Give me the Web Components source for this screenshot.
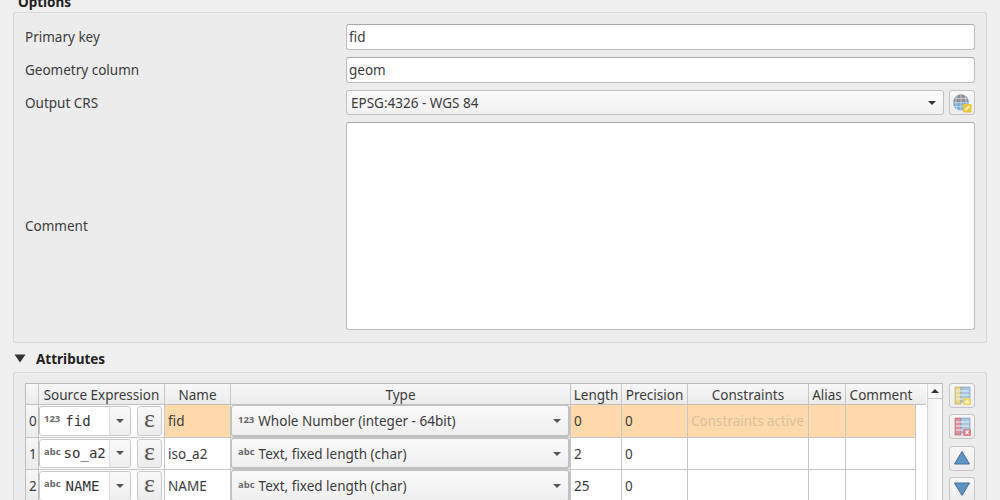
<!DOCTYPE html>
<html>
<head>
<meta charset="utf-8">
<style>
html, body { margin: 0; height: 500px; overflow: hidden; background: #efefef; }
body { font-family: "Noto Sans", sans-serif; font-size: 13.5px; color: #3c3c3c; }
qgis-page { --cols: 13px 126px 66px 340px 51px 66px 121px 37px 70px; }
</style>
</head>
<body>

<template id="group-tpl">
  <style>
    :host { display: block; }
    .title { display: flex; align-items: center; gap: 10px; height: 20px; box-sizing: border-box; font-weight: 700; color: #222; font-size: 13.500px; }
    .title svg { display: none; }
    :host([collapsible]) .title { height: 22px; padding: 0 0 5px 1px; }
    :host([collapsible]) .title svg { display: block; }
    :host(:not([collapsible])) .title { padding-left: 5px; }
    .box { border: 1px solid #d8d8d8; border-radius: 2px; background: #ececec; padding: var(--pad, 11px 11px 12px); }
  </style>
  <div class="title">
    <svg width="12" height="9" viewBox="0 0 12 9"><path d="M0.5 0.5h11L6 8.5z" fill="#333"/></svg>
    <span><slot name="title"></slot></span>
  </div>
  <div class="box"><slot></slot></div>
</template>

<script>
class QgisPage extends HTMLElement {
  constructor() {
    super();
    this.attachShadow({mode: "open"}).innerHTML = `
      <style>
        :host { display: flex; flex-direction: column; padding: 0 13px; margin-top: -8px; height: 508px; overflow: hidden; }
      </style><slot></slot>`;
  }
}
class QgisGroup extends HTMLElement {
  constructor() {
    super();
    this.attachShadow({mode: "open"}).appendChild(document.getElementById("group-tpl").content.cloneNode(true));
  }
}
class FormGrid extends HTMLElement {
  constructor() {
    super();
    this.attachShadow({mode: "open"}).innerHTML = `
      <style>
        :host { display: grid; grid-template-columns: 321px 1fr; row-gap: 7px; align-items: center; }
      </style><slot></slot>`;
  }
}
class LineEdit extends HTMLElement {
  constructor() {
    super();
    this.attachShadow({mode: "open"}).innerHTML = `
      <style>
        :host { display: block; height: 26px; box-sizing: border-box; background: #fff; border: 1px solid #bdbdbd; border-top-color: #aaa; border-radius: 3px; padding: 0 2px; line-height: 24px; color: #3c3c3c; }
        :host([multi]) { height: 208px; }
      </style><slot></slot>`;
  }
}
class ComboRow extends HTMLElement {
  constructor() {
    super();
    this.attachShadow({mode: "open"}).innerHTML = `
      <style>
        :host { display: flex; gap: 5px; height: 25px; }
        .combo { flex: 1; display: flex; align-items: center; justify-content: space-between; box-sizing: border-box; border: 1px solid #c0c0c0; border-radius: 3px; background: linear-gradient(#fbfbfb, #f1f1f1); padding: 0 7px 0 4px; }
        .arrow { width: 0; height: 0; border: 4.500px solid transparent; border-top: 4.500px solid #333; border-bottom: 0; }
        .btn { width: 26px; box-sizing: border-box; border: 1px solid #c4c4c4; border-radius: 3px; background: linear-gradient(#f8f8f8, #ececec); display: flex; align-items: center; justify-content: center; }
      </style>
      <div class="combo"><span><slot></slot></span><span class="arrow"></span></div>
      <div class="btn">
        <svg width="20" height="20" viewBox="0 0 20 20">
          <circle cx="9" cy="9.500" r="8" fill="#7eaed6"/>
          <path d="M1.500 8.500C3 3 6 1.500 9 1.500s6 1.500 7.500 7c-4 2-11 2-15 0z" fill="#8b9098"/>
          <path d="M1 9.500h16M9 1.500v16M5 2.500c-1.500 4-1.500 10 0 14M13 2.500c1.500 4 1.500 10 0 14M2.500 5.500h13M2.500 13.500h13" stroke="#dfe6ec" stroke-width=".6" fill="none"/>
          <rect x="11" y="11" width="8.500" height="8.500" rx="1" fill="#e8c63c"/>
          <path d="M12.500 18l1-2.500 3-3 1.500 1.500-3 3z" fill="#fbf3b8"/>
        </svg>
      </div>`;
  }
}
class ToolButton extends HTMLElement {
  constructor() {
    super();
    this.attachShadow({mode: "open"}).innerHTML = `
      <style>
        :host { display: flex; align-items: center; justify-content: center; width: 26px; height: 25px; box-sizing: border-box; border: 1px solid #c4c4c4; border-radius: 3px; background: linear-gradient(#f8f8f8, #ececec); }
      </style><slot></slot>`;
  }
}
class AttrRow extends HTMLElement {
  constructor() {
    super();
    this.attachShadow({mode: "open"});
  }
  connectedCallback() {
    const a = n => this.getAttribute(n) || "";
    this.shadowRoot.innerHTML = `
      <style>
        :host { display: grid; grid-template-columns: var(--cols); height: 32.500px; box-sizing: border-box; width: 890px; background: #fff; }
        :host([current]) { background: #fdd9ac; }
        .c { border-right: 1px solid #c6c6c6; border-bottom: 1px solid #c6c6c6; box-sizing: border-box; display: flex; align-items: center; padding: 1px 0 0 3px; color: #3c3c3c; white-space: nowrap; min-width: 0; }
        .num { background: linear-gradient(#f6f6f6, #ebebeb); border-right-color: #bbb; }
        .src { padding: 1px 0; gap: 6px; background: #fff; }
        .combo { width: 92px; height: 100%; box-sizing: border-box; border: 1px solid #c8c8c8; border-radius: 3px; display: flex; background: #fff; flex: none; }
        .field { width: 69px; display: flex; align-items: center; gap: 5px; padding-left: 4px; box-sizing: border-box; font-family: "DejaVu Sans Mono", monospace; font-size: 14px; color: #333; }
        :host([tight]) .field { gap: 3px; }
        .drop { flex: 1; display: flex; align-items: center; justify-content: center; background: linear-gradient(#f9f9f9, #eeeeee); border-left: 1px solid #ddd; border-radius: 0 3px 3px 0; }
        .arrow { width: 0; height: 0; border: 4px solid transparent; border-top: 4px solid #555; border-bottom: 0; }
        .eps { width: 25px; height: 100%; box-sizing: border-box; border: 1px solid #c8c8c8; border-radius: 3px; background: linear-gradient(#f8f8f8, #ececec); display: flex; align-items: center; justify-content: center; font-family: "Liberation Serif", serif; font-size: 26px; color: #555; line-height: 24px; padding-bottom: 3px; flex: none; }
        .ico { font-size: 9.500px; font-weight: 700; color: #6a6a6a; font-family: "Noto Sans", sans-serif; position: relative; top: -2px; }
        .type { padding: 0; background: #fff; }
        .tcombo { width: 100%; height: 100%; box-sizing: border-box; border: 1px solid #c0c0c0; border-radius: 3px; border-right-width: 2px; border-bottom-width: 2px; background: linear-gradient(#fafafa, #efefef); display: flex; align-items: center; justify-content: space-between; padding: 2px 7px 0 6px; }
        .t { display: flex; align-items: center; gap: 4px; }
        .muted { color: #dcbf9b; }
      </style>
      <div class="c num">${a("index")}</div>
      <div class="c src">
        <div class="combo">
          <div class="field"><span class="ico">${a("icon")}</span><span>${a("src")}</span></div>
          <div class="drop"><span class="arrow"></span></div>
        </div>
        <div class="eps">ε</div>
      </div>
      <div class="c">${a("name")}</div>
      <div class="c type"><div class="tcombo"><span class="t"><span class="ico">${a("icon")}</span>${a("type")}</span><span class="arrow"></span></div></div>
      <div class="c">${a("len")}</div>
      <div class="c">${a("prec")}</div>
      <div class="c"><span class="muted">${a("cons")}</span></div>
      <div class="c"></div>
      <div class="c"></div>`;
  }
}
class AttrTable extends HTMLElement {
  constructor() {
    super();
    this.attachShadow({mode: "open"}).innerHTML = `
      <style>
        :host { display: flex; border: 1px solid #bcbcbc; width: 918px; box-sizing: border-box; height: 200px; background: #fff; overflow: hidden; }
        .main { width: 901px; flex: none; }
        .head { display: grid; grid-template-columns: var(--cols); height: 21px; width: 900px; background: linear-gradient(#f8f8f8, #ebebeb); border-bottom: 1px solid #c0c0c0; box-sizing: border-box; }
        .head div { border-right: 1px solid #c6c6c6; text-align: center; line-height: 22px; color: #3c3c3c; white-space: nowrap; }
        .head div:last-child { border-right: 0; }
        .bar { flex: 1; border-left: 1px solid #d4d4d4; background: linear-gradient(90deg, #f2f2f2, #fbfbfb); }
        .up { height: 14px; border-bottom: 1px solid #c8c8c8; background: #f6f6f6; display: flex; justify-content: center; align-items: center; }
        .up i { width: 0; height: 0; border: 4.500px solid transparent; border-bottom: 4.500px solid #333; border-top: 0; }
      </style>
      <div class="main">
        <div class="head">
          <div></div><div>Source Expression</div><div>Name</div><div>Type</div><div>Length</div><div>Precision</div><div>Constraints</div><div>Alias</div><div>Comment</div>
        </div>
        <slot></slot>
      </div>
      <div class="bar"><div class="up"><i></i></div></div>`;
  }
}
class AttrLayout extends HTMLElement {
  constructor() {
    super();
    this.attachShadow({mode: "open"}).innerHTML = `
      <style>
        :host { display: flex; gap: 6px; }
        .side { display: flex; flex-direction: column; gap: 6.300px; }
      </style>
      <slot></slot>
      <div class="side"><slot name="side"></slot></div>`;
  }
}
customElements.define("qgis-page", QgisPage);
customElements.define("qgis-group", QgisGroup);
customElements.define("form-grid", FormGrid);
customElements.define("line-edit", LineEdit);
customElements.define("combo-row", ComboRow);
customElements.define("tool-button", ToolButton);
customElements.define("attr-row", AttrRow);
customElements.define("attr-table", AttrTable);
customElements.define("attr-layout", AttrLayout);
</script>

<qgis-page>
  <qgis-group style="margin-bottom:7px">
    <span slot="title">Options</span>
    <form-grid>
      <span>Primary key</span><line-edit>fid</line-edit>
      <span>Geometry column</span><line-edit>geom</line-edit>
      <span>Output CRS</span><combo-row>EPSG:4326 - WGS 84</combo-row>
      <span>Comment</span><line-edit multi></line-edit>
    </form-grid>
  </qgis-group>
  <qgis-group collapsible style="--pad:10px 11px 0">
    <span slot="title">Attributes</span>
    <attr-layout>
      <attr-table>
        <attr-row current index="0" icon="123" src="fid" name="fid" type="Whole Number (integer - 64bit)" len="0" prec="0" cons="Constraints active"></attr-row>
        <attr-row tight index="1" icon="abc" src="so_a2" name="iso_a2" type="Text, fixed length (char)" len="2" prec="0"></attr-row>
        <attr-row index="2" icon="abc" src="NAME" name="NAME" type="Text, fixed length (char)" len="25" prec="0"></attr-row>
      </attr-table>
      <tool-button slot="side">
        <svg width="20" height="20" viewBox="0 0 20 20"><rect x="3" y="1" width="6" height="17" fill="#e6d88e" stroke="#b9a24a" stroke-width=".6"/><rect x="9" y="1" width="9" height="15" fill="#a5c4de" stroke="#7d9bb8" stroke-width=".6"/><path d="M4 5h13M4 9h13M4 13h7" stroke="#eef3f7" stroke-width="1"/><rect x="11" y="12" width="8" height="7" rx="1" fill="#ecd36a"/><path d="M15 13l1 2h2l-1.500 1.300.5 2-2-1.200-2 1.200.5-2L12 15h2z" fill="#fff6c4"/></svg>
      </tool-button>
      <tool-button slot="side">
        <svg width="20" height="20" viewBox="0 0 20 20"><rect x="3" y="1" width="6" height="17" fill="#dd919c" stroke="#b4606c" stroke-width=".6"/><rect x="9" y="1" width="9" height="15" fill="#a5c4de" stroke="#7d9bb8" stroke-width=".6"/><path d="M4 5h13M4 9h13M4 13h7" stroke="#eef3f7" stroke-width="1"/><rect x="11" y="12" width="8" height="7" rx="1" fill="#e27f8b"/><path d="M13.500 13.500l3 3.500M16.500 13.500l-3 3.500" stroke="#fff" stroke-width="1.200"/></svg>
      </tool-button>
      <tool-button slot="side">
        <svg width="18" height="16" viewBox="0 0 18 16"><path d="M9 1.500L16.500 14h-15z" fill="#5f93c4" stroke="#44709c" stroke-width="1"/></svg>
      </tool-button>
      <tool-button slot="side">
        <svg width="18" height="16" viewBox="0 0 18 16"><path d="M9 14.500L16.500 2h-15z" fill="#5f93c4" stroke="#44709c" stroke-width="1"/></svg>
      </tool-button>
    </attr-layout>
  </qgis-group>
</qgis-page>
</body>
</html>
